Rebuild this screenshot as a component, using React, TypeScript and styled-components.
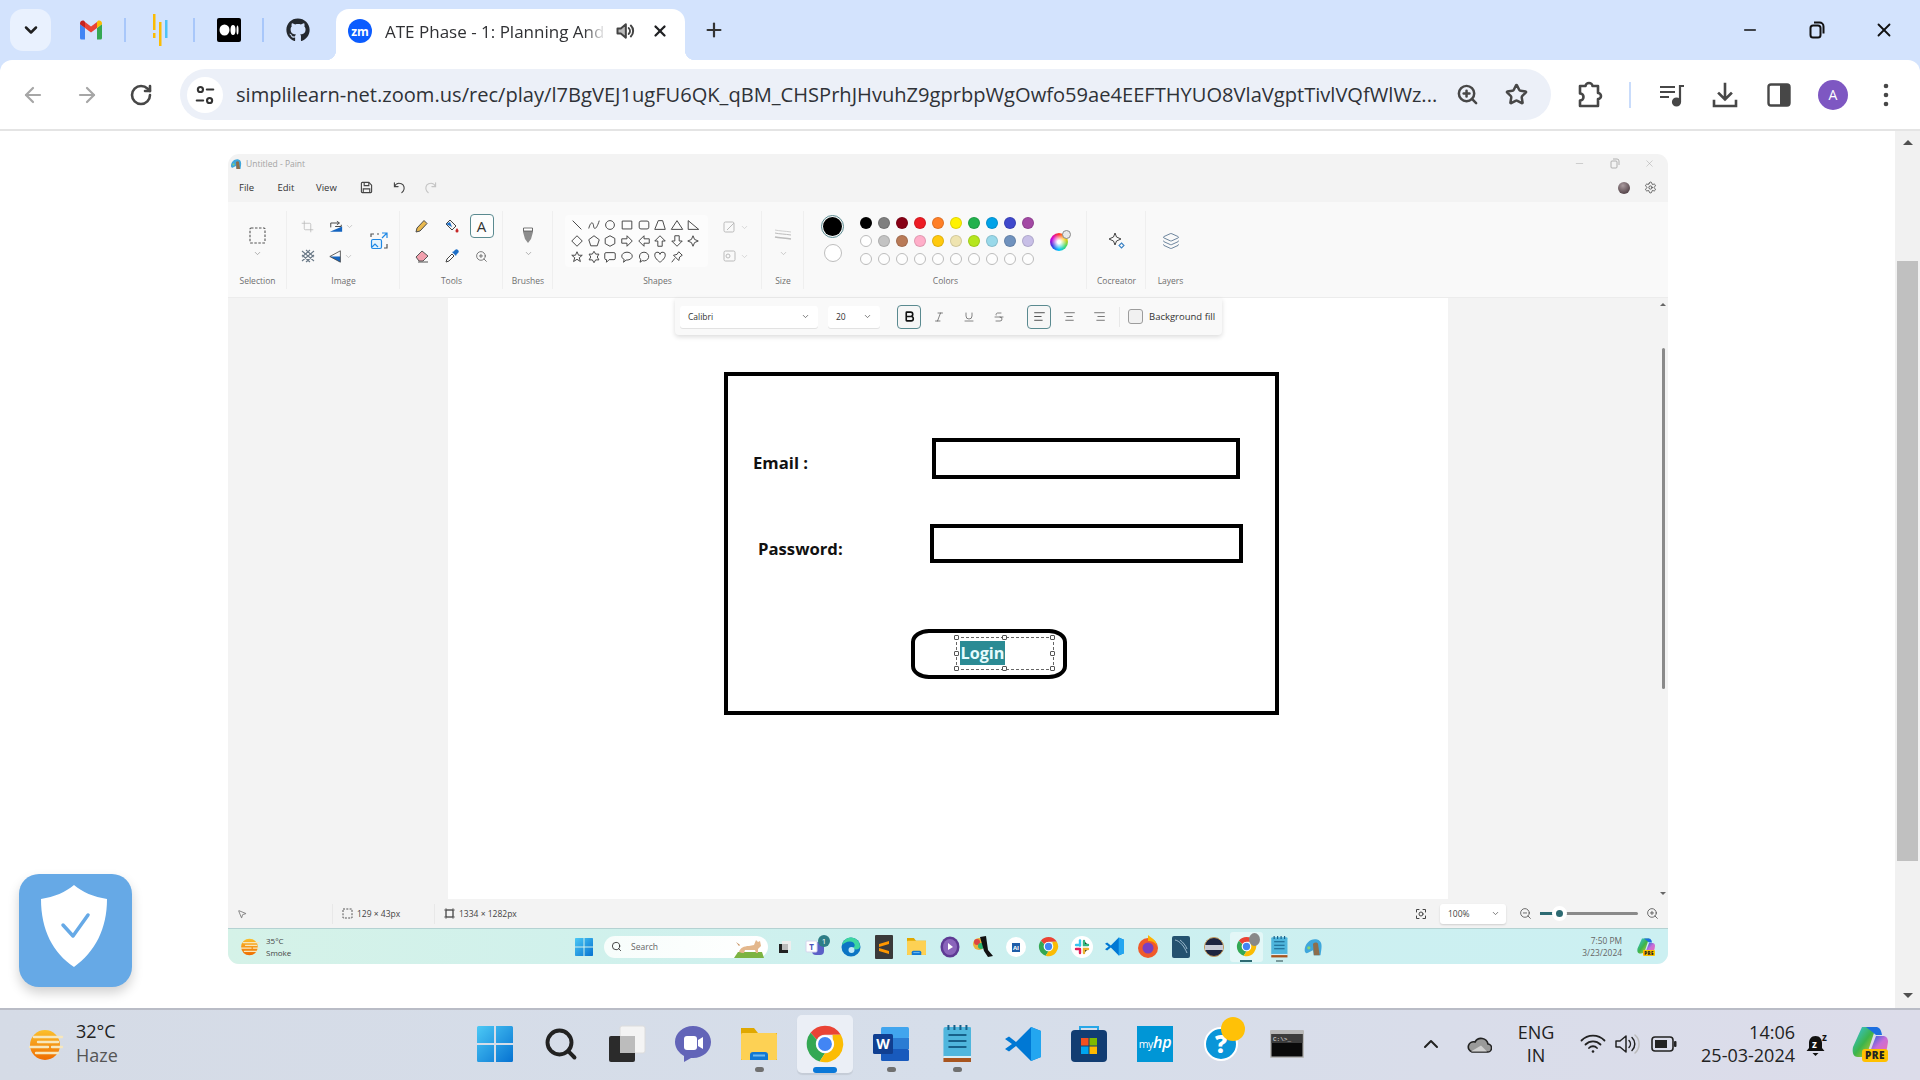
import React from "react";
import styled, { createGlobalStyle } from "styled-components";
import { ArrowLeft, ArrowRight, RotateCw, X, Plus, ChevronDown, ChevronUp, Star, ZoomIn, ZoomOut, Minus, Settings, Search, Layers, Bold, Italic, Underline, Strikethrough, AlignLeft, AlignCenter, AlignRight, Crop, MousePointer2 } from "lucide-react";
import { FaGithub } from "react-icons/fa";

const Global = createGlobalStyle`
  html, body { margin: 0; padding: 0; width: 1920px; height: 1080px; overflow: hidden; background: #fff; }
  body { font-family: "Open Sans", "Noto Sans", sans-serif; }
  * { box-sizing: border-box; }
`;

const Page = styled.div`position: relative; width: 1920px; height: 1080px; display: flex; flex-direction: column; overflow: hidden;`;
const Slot = styled.div<{ $w: number; $ml?: number }>`flex: none; width: ${p => p.$w}px; margin-left: ${p => p.$ml ?? 0}px; display: flex; align-items: center; justify-content: center; position: relative;`;

/* ---------- Chrome ---------- */
const Chrome = styled.header`flex: none; height: 131px; background: #d3e3fd;`;
const TabStrip = styled.div`height: 60px; display: flex; align-items: flex-end;`;
const TabListButton = styled.div`margin: 0 5px 9px 10px; width: 41px; height: 42px; border-radius: 13px; background: #e9f1fe; display: flex; align-items: center; justify-content: center; color: #1f1f1f;`;
const Pinned = styled.div<{ $sep?: boolean }>`
  width: 69px; height: 51px; display: flex; align-items: center; justify-content: center; position: relative; padding-bottom: 9px;
  ${p => p.$sep ? `&::after { content: ""; position: absolute; right: -1px; top: 9px; width: 2px; height: 24px; background: #a8c7fa; }` : ""}
`;
const ActiveTab = styled.div`
  margin-left: 4px; width: 349px; height: 51px; background: #fff; border-radius: 13px 13px 0 0; position: relative;
  display: flex; align-items: center; padding: 0 0 7px 12px;
  &::before, &::after { content: ""; position: absolute; bottom: 0; width: 10px; height: 10px; }
  &::before { left: -10px; background: radial-gradient(circle at 0 0, transparent 10px, #fff 10.5px); }
  &::after { right: -10px; background: radial-gradient(circle at 100% 0, transparent 10px, #fff 10.5px); }
`;
const ZoomBadge = styled.div`width: 24px; height: 24px; border-radius: 50%; background: #0b5cff; color: #fff; font-size: 12px; font-weight: 700; display: flex; align-items: center; justify-content: center; flex: none;`;
const TabTitle = styled.span`
  margin-left: 13px; width: 221px; flex: none; font-size: 17px; color: #303134; white-space: nowrap; margin-top: 1px;
  mask-image: linear-gradient(90deg, #000 90%, transparent 100%);
`;
const TabButtons = styled.div`display: flex; align-items: center; margin-left: 9px; color: #202124;`;
const NewTab = styled.div`flex: none; width: 36px; height: 60px; margin-left: 11px; display: flex; align-items: center; justify-content: center; color: #333;`;
const WindowButtons = styled.div`margin-left: auto; padding-right: 3px; height: 60px; display: flex; color: #111;`;

const Toolbar = styled.div`
  height: 71px; background: #fff; border-radius: 12px 12px 0 0; border-bottom: 2px solid #e4e4e4; display: flex; align-items: center; padding-left: 6px; color: #474747;
`;
const Omnibox = styled.div`margin-left: 12px; width: 1371px; height: 51px; border-radius: 26px; background: #ecf0f8; display: flex; align-items: center; padding-left: 7px; flex: none;`;
const TuneCircle = styled.div`width: 36px; height: 36px; border-radius: 50%; background: #fff; display: flex; align-items: center; justify-content: center; flex: none;`;
const Url = styled.div`margin-left: 13px; width: 1205px; flex: none; font-size: 20.1px; color: #2f3237; white-space: nowrap;`;
const OmniIcons = styled.div`display: flex; color: #474747;`;
const ToolSep = styled.div`width: 2px; height: 26px; background: #c9dcfb;`;
const Avatar = styled.div`width: 30px; height: 30px; border-radius: 50%; background: #7e57c2; color: #fff; font-size: 14px; display: flex; align-items: center; justify-content: center;`;

/* ---------- Page ---------- */
const Main = styled.main`flex: none; height: 877px; display: flex; background: #fff;`;
const Content = styled.div`flex: 1; padding: 23px 0 0 228px;`;
const PageScroll = styled.div`flex: none; width: 25px; background: #f1f1f1; display: flex; flex-direction: column; align-items: center; padding-top: 9px; color: #505050;`;
const PageThumb = styled.div`width: 21px; height: 600px; background: #c0c0c0; margin-top: 115.5px; margin-bottom: auto;`;
const Tri = styled.div<{ $down?: boolean; $size?: number; $c?: string }>`
  width: 0; height: 0; flex: none;
  border-left: ${p => p.$size ?? 5.5}px solid transparent; border-right: ${p => p.$size ?? 5.5}px solid transparent;
  ${p => p.$down ? `border-top: ${p.$size ?? 5.5}px solid ${p.$c ?? "#505050"};` : `border-bottom: ${p.$size ?? 5.5}px solid ${p.$c ?? "#505050"};`}
`;
const PageDown = styled(Tri)`margin-bottom: 10px;`;

/* ---------- Paint ---------- */
const Paint = styled.section`width: 1440px; height: 810px; border-radius: 11px; overflow: hidden; background: #f3f3f3; display: flex; flex-direction: column;`;
const TitleRow = styled.div`height: 21px; flex: none; display: flex; align-items: center; padding: 0 0 2px 2px; color: #a4a4a4; font-size: 8.5px; gap: 4px;`;
const WinCtl = styled.div`margin-left: auto; display: flex; color: #a0a0a0; padding-right: 13px; gap: 24px;`;
const MenuRow = styled.div`height: 27px; flex: none; display: flex; align-items: center; font-size: 9.5px; color: #333; padding: 1px 0 3px 11px;`;
const MenuItem = styled.span`width: 38.5px; flex: none;`;
const MenuRight = styled.div`margin-left: auto; display: flex; align-items: center; padding-right: 11px; gap: 14px; color: #444;`;
const UserDot = styled.div`width: 12px; height: 12px; border-radius: 50%; background: radial-gradient(circle at 40% 30%, #a99a9e, #5a4a4f 70%);`;

const Ribbon = styled.div`height: 96px; flex: none; background: #f9f9f9; border-bottom: 1px solid #ececec; display: flex;`;
const Group = styled.div<{ $w: number; $sep?: boolean }>`
  flex: none; width: ${p => p.$w}px; display: flex; flex-direction: column; align-items: center; position: relative; padding-top: 8px;
  ${p => p.$sep ? `&::after { content: ""; position: absolute; right: 0; top: 9px; bottom: 8px; width: 1px; background: #efefef; }` : ""}
`;
const GroupBody = styled.div`flex: none; width: 100%; height: 65px; display: flex; align-items: flex-start; justify-content: center;`;
const GroupLabel = styled.div`font-size: 8.5px; line-height: 12px; color: #6f6f6f; white-space: nowrap;`;
const Cell = styled.div`height: 30px; display: flex; align-items: center; justify-content: center; gap: 2px;`;
const SoloColumn = styled.div`display: flex; flex-direction: column; align-items: center; width: 40px; padding-top: 16px; gap: 5px; color: #a0a0a0;`;
const SoloIcon = styled.div`height: 18px; display: flex; align-items: center; justify-content: center;`;
const ImageGrid = styled.div`display: grid; grid-template-columns: 31px 36px; grid-auto-rows: 30px; margin-right: 8px;`;
const ImageRow = styled.div`display: flex; width: 100px; margin-left: 5px; margin-right: auto; padding-top: 1px;`;
const ResizeCell = styled.div`width: 24px; height: 60px; display: flex; align-items: center; justify-content: center;`;
const ToolsGrid = styled.div`display: grid; grid-template-columns: repeat(3, 30px); grid-auto-rows: 30px; padding-top: 1px;`;
const ActiveTool = styled.div`width: 24px; height: 24px; border: 1px solid #5a8a90; border-radius: 4px; background: #fdfdfd; display: flex; align-items: center; justify-content: center; color: #333; font-size: 15px; line-height: 1;`;
const ShapesRow = styled.div`display: flex; width: 100%; padding: 5px 0 0 12px; gap: 4px;`;
const ShapesPanel = styled.div`width: 143px; height: 52px; border-radius: 4px; background: #fcfcfc; display: grid; grid-template-columns: repeat(8, 16.6px); grid-auto-rows: 16px; padding: 2px 0 0 4px; flex: none;`;
const ShapeCell = styled.div`display: flex; align-items: center; justify-content: center;`;
const GreyTools = styled.div`display: flex; flex-direction: column; gap: 17px; padding: 6px 0 0 11px; color: #bbb;`;
const GreyTool = styled.div`display: flex; align-items: center; gap: 4px;`;
const ColorsRow = styled.div`display: flex; align-items: flex-start; width: 100%; padding-left: 17px;`;
const ActiveColours = styled.div`width: 23px; display: flex; flex-direction: column; align-items: center; gap: 6px; padding-top: 5px;`;
const CurrentColour = styled.div`width: 23px; height: 23px; border-radius: 50%; border: 1px solid #5a8a90; display: flex; align-items: center; justify-content: center;`;
const CurrentInner = styled.div`width: 19px; height: 19px; border-radius: 50%; background: #000;`;
const SecondColour = styled.div`width: 18px; height: 18px; border-radius: 50%; background: #fff; border: 1px solid #bdbdbd;`;
const Swatches = styled.div`display: grid; grid-template-columns: repeat(10, 12px); column-gap: 6px; grid-auto-rows: 12px; row-gap: 6px; margin: 7px 0 0 16px;`;
const Swatch = styled.div<{ $c?: string }>`
  width: 12px; height: 12px; border-radius: 50%; background: ${p => p.$c ?? "#fdfdfd"}; border: 1px solid ${p => p.$c && p.$c !== "#fff" ? "rgba(0,0,0,.12)" : "#bcbcbc"};
`;
const Wheel = styled.div`
  position: relative; width: 18px; height: 18px; border-radius: 50%; margin: 23px 0 0 16px; flex: none;
  background: radial-gradient(circle, #fff 0 12%, transparent 60%), conic-gradient(#ff3b30, #ffcc00, #4cd964, #00c7ff, #3a3ae0, #d400d4, #ff3b30);
`;
const WheelPlus = styled.div`position: absolute; right: -3px; top: -3px; width: 9px; height: 9px; border-radius: 50%; background: #e8e8e8; border: 1px solid #888;`;
const LoneIcon = styled.div`padding-top: 22px; display: flex; align-items: flex-start; justify-content: center; color: #444;`;

const Workspace = styled.div`flex: none; height: 601px; display: flex; position: relative; background: #f3f3f3;`;
const Gutter = styled.div`flex: none; width: 220px;`;
const Canvas = styled.div`flex: none; width: 1000px; height: 601px; background: #fff; position: relative;`;
const RailGutter = styled.div`flex: 1; display: flex; justify-content: flex-end;`;
const Rail = styled.div`width: 10px; display: flex; flex-direction: column; align-items: center; padding: 5px 0 4px;`;
const RailThumb = styled.div`width: 3px; height: 341px; border-radius: 2px; background: #8a8a8a; margin-top: 42px; margin-bottom: auto;`;

const TextBar = styled.div`
  position: absolute; left: 447px; top: 0; width: 547px; height: 37px; background: #f9f9f9; border-radius: 0 0 4px 4px;
  box-shadow: 0 2px 5px rgba(0,0,0,.14); display: flex; align-items: center; padding-left: 5px; font-size: 8.5px; color: #333;
`;
const Select = styled.div<{ $w: number; $ml?: number }>`
  width: ${p => p.$w}px; margin-left: ${p => p.$ml ?? 0}px; height: 22px; flex: none; background: #fff; border-radius: 3px; box-shadow: 0 1px 0 #e2e2e2; display: flex; align-items: center; justify-content: space-between; padding: 0 8px;
`;
const FmtBtn = styled.div<{ $on?: boolean; $ml?: number }>`
  width: 24px; height: 24px; flex: none; border-radius: 4px; display: flex; align-items: center; justify-content: center; margin-left: ${p => p.$ml ?? 6}px; color: #444;
  ${p => p.$on ? `border: 1px solid #5a8a90; background: #f6f6f6; color: #111;` : ""}
`;
const BarSep = styled.div`width: 1px; height: 20px; background: #e8e8e8; margin-left: 8px; flex: none;`;
const Check = styled.div`width: 15px; height: 15px; margin-left: 8px; flex: none; background: #f1f1f1; border: 1px solid #9c9c9c; border-radius: 3px;`;
const CheckLabel = styled.span`margin-left: 6px; white-space: nowrap; font-size: 9.5px;`;

const Drawn = styled.div<{ $x: number; $y: number; $w: number; $h: number }>`
  position: absolute; left: ${p => p.$x}px; top: ${p => p.$y}px; width: ${p => p.$w}px; height: ${p => p.$h}px; border: 4px solid #000;
`;
const DrawnButton = styled(Drawn)`border-radius: 18px / 13px;`;
const DrawnText = styled.div<{ $x: number; $y: number }>`
  position: absolute; left: ${p => p.$x}px; top: ${p => p.$y}px; font-weight: 700; font-size: 16.7px; line-height: 24px; color: #111; white-space: nowrap;
`;
const TextSelection = styled.div`position: absolute; left: 508px; top: 339px; width: 98px; height: 33px; border: 1px dashed #666;`;
const Handle = styled.div<{ $x: string; $y: string }>`
  position: absolute; left: ${p => p.$x}; top: ${p => p.$y}; width: 5px; height: 5px; margin: -3px 0 0 -3px; background: #fff; border: 1px solid #555; border-radius: 1px;
`;
const Highlight = styled.span`
  position: absolute; left: 3px; top: 3px; width: 45px; height: 24px; background: #2b8b94; color: #e6fbfd; font-weight: 700; font-size: 16.2px; line-height: 24px; white-space: nowrap; text-align: center;
`;

const StatusBar = styled.div`flex: none; height: 29px; background: #f3f3f3; display: flex; align-items: center; font-size: 8.5px; color: #444;`;
const StatusCell = styled.div<{ $w: number; $sep?: boolean }>`
  flex: none; width: ${p => p.$w}px; height: 20px; display: flex; align-items: center; gap: 4px; padding-left: 9px;
  ${p => p.$sep ? "border-left: 1px solid #e8e8e8;" : ""}
`;
const ZoomControls = styled.div`margin-left: auto; display: flex; align-items: center; padding-right: 9px; color: #444;`;
const ZoomSelect = styled(Select)`margin-left: 13px; height: 20px; box-shadow: 0 1px 2px rgba(0,0,0,.15); padding: 0 6px 0 8px;`;
const ZoomOutSlot = styled.div`width: 26px; flex: none; display: flex; justify-content: flex-end;`;
const Slider = styled.div`width: 98px; height: 3px; margin: 0 8px; background: #8a8a8a; position: relative; border-radius: 2px;`;
const SliderFill = styled.div`position: absolute; left: 0; top: 0; width: 17px; height: 3px; background: #2d6a72;`;
const SliderKnob = styled.div`position: absolute; left: 12px; top: -6px; width: 15px; height: 15px; border-radius: 50%; background: #2d6a72; border: 4px solid #fff;`;

const InnerTaskbar = styled.div`
  flex: none; height: 36px; border-top: 1px solid #b4d2d2; background: linear-gradient(90deg, #d5f2e8 0%, #cdf0ef 45%, #ccf0f2 100%); display: flex; align-items: center; padding: 0 13px 0 10px;
`;
const InnerWeather = styled.div`width: 337px; display: flex; align-items: center; gap: 6px; padding-left: 2px; font-size: 8px; line-height: 11.5px; color: #444; flex: none;`;
const InnerStart = styled.div`width: 29px; flex: none; display: flex; justify-content: flex-start;`;
const InnerSearch = styled.div`
  width: 164px; height: 22px; border-radius: 11px; background: linear-gradient(90deg, #f7fdfb, #ffffff); display: flex; align-items: center; padding-left: 7px; gap: 9px; font-size: 8.5px; color: #666; flex: none; position: relative;
`;
const DoodleWrap = styled.div`margin-left: auto; margin-right: 4px; display: flex;`;
const InnerIcons = styled.div`display: flex; flex: none;`;
const InnerIcon = styled.div<{ $on?: boolean }>`
  width: 33px; height: 30px; display: flex; align-items: center; justify-content: center; position: relative; flex: none;
  ${p => p.$on ? `background: rgba(255,255,255,.45); border-radius: 3px; &::after { content: ""; position: absolute; bottom: 0; left: 10px; width: 12px; height: 2px; background: #2d6a72; }` : ""}
`;
const InnerClock = styled.div`margin-left: auto; text-align: right; font-size: 8.4px; line-height: 12px; color: #666; margin-right: 15px;`;

/* ---------- Windows taskbar ---------- */
const Taskbar = styled.footer`
  flex: none; height: 72px; border-top: 2px solid #b9bcc6; background: linear-gradient(90deg, #d5dbe6 0%, #d6deea 50%, #dcdcea 100%); display: flex; align-items: center;
`;
const TaskWeather = styled.div`width: 462px; flex: none; display: flex; align-items: center; padding-left: 28px; gap: 12px;`;
const WeatherText = styled.div`font-size: 18px; line-height: 23.5px; color: #222; margin-top: -3px;`;
const WeatherSub = styled.div`color: #555;`;
const TaskIcons = styled.div`display: flex; flex: none; height: 70px; align-items: center;`;
const TaskIcon = styled.div<{ $on?: boolean; $dot?: boolean }>`
  width: 66px; height: 58px; flex: none; display: flex; align-items: center; justify-content: center; position: relative; border-radius: 5px; margin-top: -2px;
  ${p => p.$on ? `background: #ebeff6; box-shadow: 0 2px 1px rgba(0,0,0,.08); width: 56px; margin: -2px 5px 0; &::after { content: ""; position: absolute; bottom: 0; left: 16px; width: 24px; height: 6px; border-radius: 3px; background: #0a78d8; }` : ""}
  ${p => p.$dot ? `&::after { content: ""; position: absolute; bottom: 1px; left: 29px; width: 9px; height: 5px; border-radius: 3px; background: #707070; }` : ""}
`;
const Tray = styled.div`display: flex; align-items: center; flex: none; margin-left: 93px; color: #222; margin-top: -2px;`;
const TrayText = styled.div<{ $w: number; $r?: boolean }>`
  width: ${p => p.$w}px; flex: none; font-size: 18px; line-height: 23.5px; color: #222; text-align: ${p => p.$r ? "right" : "center"}; white-space: nowrap;
`;

/* Shield badge overlay */
const ShieldBadge = styled.div`
  position: absolute; left: 19px; top: 874px; width: 113px; height: 113px; border-radius: 20px; background: #66a9e6; box-shadow: 0 6px 12px rgba(0,0,0,.18); display: flex; align-items: center; justify-content: center; padding: 0 3px 9px 0;
`;

/* ---------- Icons ---------- */
const Stroke: React.FC<{ s?: number; w?: number; c?: string; v?: number; children: React.ReactNode }> = ({ s = 24, w = 2, c = "currentColor", v = 24, children }) => (
  <svg width={s} height={s} viewBox={`0 0 ${v} ${v}`} fill="none" stroke={c} strokeWidth={w} strokeLinecap="round" strokeLinejoin="round">{children}</svg>
);
const Gmail = () => (
  <svg width="24" height="20" viewBox="0 0 24 20">
    <path d="M1 4v14a1.500 1.500 0 0 0 1.500 1.500H6V8z" fill="#4285f4" />
    <path d="M23 4v14a1.500 1.500 0 0 1-1.500 1.500H18V8z" fill="#34a853" />
    <path d="M6 8l6 4.500L18 8V2l-6 4.500L6 2z" fill="#ea4335" />
    <path d="M18 2v6l5-3.700V3.200C23 1 20.400-.4 18.700.9z" fill="#fbbc04" />
    <path d="M6 2v6L1 4.300V3.200C1 1 3.600-.4 5.300.9z" fill="#c5221f" />
  </svg>
);
const BarsLogo = () => (
  <svg width="16" height="32" viewBox="0 0 16 32">
    <rect x="1" y="0" width="2.500" height="16" fill="#fbbc04" /><rect x="1" y="19" width="2.500" height="5" fill="#fbbc04" />
    <rect x="7" y="8" width="2.500" height="24" fill="#fbbc04" />
    <rect x="13" y="6" width="2.500" height="18" fill="#4fc3f7" />
  </svg>
);
const Medium = () => (
  <svg width="24" height="24" viewBox="0 0 24 24">
    <rect width="24" height="24" rx="2" fill="#000" />
    <ellipse cx="7.500" cy="12" rx="5" ry="5.500" fill="#fff" /><ellipse cx="16" cy="12" rx="2.500" ry="5" fill="#fff" /><ellipse cx="20.500" cy="12" rx="1" ry="4.500" fill="#fff" />
  </svg>
);
const Speaker = ({ s = 22, c = "#444" }: { s?: number; c?: string }) => (
  <svg width={s} height={s} viewBox="0 0 24 24" fill="none" stroke={c} strokeWidth="2.400"><path d="M3 9v6h4l6 5V4L7 9z" fill="#bbb" strokeLinejoin="round" /><path d="M16.500 8.500a5 5 0 0 1 0 7M19 5.500a9 9 0 0 1 0 13" strokeLinecap="round" /></svg>
);
const Restore = () => (
  <svg width="16" height="18" viewBox="0 0 16 18" fill="none" stroke="#111" strokeWidth="2"><rect x="1.500" y="4.500" width="10" height="12" rx="2.500" /><path d="M5 1.500h5.500a4 4 0 0 1 4 4v7" /></svg>
);
const Tune = () => (
  <Stroke s={22} w={2.300} c="#333"><circle cx="7" cy="6" r="2.800" /><path d="M14 6h7M3 18h7" /><circle cx="17" cy="18" r="2.800" /></Stroke>
);
const Extension = () => (
  <svg width="26" height="28" viewBox="0 0 26 28" fill="none" stroke="#474747" strokeWidth="2.600" strokeLinejoin="round"><path d="M3 5h5.500a3.500 3 0 0 1 7 0H21v7a3 3 0 0 1 0 6v7H3v-5.500a3.500 3.500 0 0 0 0-7z" /></svg>
);
const MediaQueue = () => (
  <svg width="26" height="26" viewBox="0 0 26 26" fill="none" stroke="#474747" strokeWidth="2.200"><path d="M1 5h15M1 10h15M1 15h9" /><path d="M21 20V4h4" /><circle cx="17.500" cy="20" r="3.500" fill="#474747" /></svg>
);
const DownloadIc = () => (
  <svg width="26" height="26" viewBox="0 0 26 26" fill="none" stroke="#474747" strokeWidth="2.600" strokeLinecap="square"><path d="M13 2v15M7 11.500l6 6 6-6M2 19v5h22v-5" /></svg>
);
const SidePanel = () => (
  <svg width="24" height="24" viewBox="0 0 24 24"><rect x="1.500" y="1.500" width="21" height="21" rx="2.500" fill="none" stroke="#474747" strokeWidth="2.400" /><rect x="13" y="2" width="10" height="20" fill="#474747" /></svg>
);
const Kebab = () => (
  <svg width="6" height="24" viewBox="0 0 6 24" fill="#474747"><circle cx="3" cy="3" r="2.300" /><circle cx="3" cy="12" r="2.300" /><circle cx="3" cy="21" r="2.300" /></svg>
);
const PaintLogo = ({ s = 12 }: { s?: number }) => (
  <svg width={s} height={s} viewBox="0 0 24 24"><path d="M2 16C2 7 10 1 17 3c5 1.500 6 6 5 12l-1 7h-8l-1-6-6 3c-2 1-4 0-4-3z" fill="#3fa7dc" /><path d="M12 8c2-2 5-2 6 0l2 14h-7z" fill="#8d6e4c" /><circle cx="7" cy="13" r="2" fill="#8bd46e" /></svg>
);
const Dashed = ({ s = 17 }: { s?: number }) => (
  <svg width={s} height={s} viewBox="0 0 17 17" fill="none" stroke="#555" strokeWidth="1.100" strokeDasharray="2.500 1.500"><rect x="1" y="1" width="15" height="15" rx="1" /></svg>
);
const Save = () => (
  <svg width="13" height="13" viewBox="0 0 14 14" fill="none" stroke="#444" strokeWidth="1.200"><path d="M2.500 1.500h7l3 3v7a1 1 0 0 1-1 1h-9a1 1 0 0 1-1-1v-9a1 1 0 0 1 1-1z" /><path d="M4.500 1.500v3.500h5v-3.500M3.500 12.500v-4h7v4" /></svg>
);
const Undo = ({ c = "#444" }: { c?: string }) => (
  <svg width="13" height="13" viewBox="0 0 14 14" fill="none" stroke={c} strokeWidth="1.200" strokeLinecap="round"><path d="M1.500 2v4h4M1.500 6C3 3 6 1.800 9 3s4 5 2 8l-1.500 1.500" /></svg>
);
const Redo = () => (
  <svg width="13" height="13" viewBox="0 0 14 14" fill="none" stroke="#c4c4c4" strokeWidth="1.200" strokeLinecap="round"><path d="M12.500 2v4h-4M12.500 6C11 3 8 1.800 5 3s-4 5-2 8l1.500 1.500" /></svg>
);
const Rotate = () => (
  <svg width="14" height="13" viewBox="0 0 16 14"><path d="M1 13L15 7v6z" fill="#1565c0" /><path d="M2 8V3h9M9 1l3 2-3 2M14 5v2H7" fill="none" stroke="#444" strokeWidth="1.100" /></svg>
);
const Flip = () => (
  <svg width="13" height="13" viewBox="0 0 16 16"><path d="M14 8v7L1 8z" fill="#1565c0" /><path d="M14 1L1 8l13 7z" fill="none" stroke="#444" strokeWidth="1" /></svg>
);
const Skew = () => (
  <svg width="14" height="14" viewBox="0 0 14 14" stroke="#6b7a88" strokeWidth="1.100" fill="none"><path d="M1 2l12 10M1 6l8 7M5 1l8 7M13 2L1 12M13 6l-8 7M9 1L1 8" /></svg>
);
const ResizeImg = () => (
  <svg width="18" height="18" viewBox="0 0 18 18" fill="none" strokeWidth="1.200"><path d="M1 5V2h3M7 2h2M17 12v4h-3" stroke="#555" /><path d="M12 1h5v5M17 1l-5 5" stroke="#1e88e5" /><rect x="1.500" y="7.500" width="10" height="9" rx="1.500" stroke="#1e88e5" fill="#e3f2fd" /><path d="M2 15l3-3 3 3" stroke="#1e88e5" /></svg>
);
const Pencil = () => (
  <svg width="14" height="14" viewBox="0 0 14 14"><path d="M1 13l1-4 7-7.500 3 3L5 12z" fill="#e9b94f" stroke="#4a4a4a" strokeWidth="1" strokeLinejoin="round" /></svg>
);
const FillBucket = () => (
  <svg width="14" height="14" viewBox="0 0 14 14"><path d="M1 5l4-4 6 6-4 4z" fill="#f4f4f4" stroke="#444" strokeWidth="1" /><path d="M1 5l4-2 2 5z" fill="#1e6fc7" /><path d="M12 9c1 1.500 1.500 2 1.500 3a1.500 1.500 0 0 1-3 0c0-1 .5-1.500 1.500-3z" fill="#c62828" /></svg>
);
const Eraser = () => (
  <svg width="14" height="13" viewBox="0 0 14 13"><path d="M1 7l6-6 6 5-5 5H4z" fill="#f2a0ae" stroke="#555" strokeWidth="1" strokeLinejoin="round" /><path d="M3 12h10" stroke="#555" strokeWidth="1" /></svg>
);
const Picker = () => (
  <svg width="14" height="14" viewBox="0 0 14 14"><path d="M1 13l1-3 5-5 2 2-5 5z" fill="#fff" stroke="#444" strokeWidth="1" /><path d="M7 3l1.500-.5L10 1a2 2 0 0 1 3 3l-1.500 1.500L11 7z" fill="#1e6fc7" /></svg>
);
const Brush = () => (
  <svg width="10" height="17" viewBox="0 0 10 17"><path d="M0 1h10v4L8 12l-3 4-3-4L0 5z" fill="#8c8c8c" /><path d="M.5 1h9v3h-9z" fill="#fff" stroke="#555" strokeWidth=".8" /></svg>
);
const SizeIc = () => (
  <svg width="18" height="12" viewBox="0 0 18 12" fill="none" stroke="#bcbcbc"><path d="M1 1c4 1 10 1 16 2" strokeWidth=".7" /><path d="M1 4c4 1 10 1 16 2" strokeWidth="1" /><path d="M1 8c4 1 10 1 16 2" strokeWidth="1.600" /></svg>
);
const Sparkle = () => (
  <svg width="18" height="18" viewBox="0 0 18 18" fill="none"><path d="M7 1l1.500 4L13 7 8.500 9 7 13 5.500 9 1 7l4.500-2z" stroke="#444" strokeWidth="1" strokeLinejoin="round" /><path d="M13.500 11l2.500 2.500-2.500 2.500-2.500-2.500z" stroke="#3b82c4" strokeWidth="1.100" /></svg>
);
const Fit = () => (
  <Stroke s={12} w={2}><path d="M3 8V3h5M16 3h5v5M21 16v5h-5M8 21H3v-5" /><circle cx="12" cy="12" r="4" /></Stroke>
);
const SelIc = () => <svg width="11" height="11" viewBox="0 0 11 11" fill="none" stroke="#555" strokeDasharray="2 1.300"><rect x="1" y="1" width="9" height="9" /></svg>;
const CanvasIc = () => <svg width="11" height="11" viewBox="0 0 11 11" fill="none" stroke="#444"><rect x="2" y="2" width="7" height="7" /><path d="M0 2h11M0 9h11M2 0v11M9 0v11" strokeWidth=".6" /></svg>;

const WinLogo = ({ s = 36 }: { s?: number }) => (
  <svg width={s} height={s} viewBox="0 0 36 36">
    <defs><linearGradient id={`wl${s}`} x1="0" y1="0" x2="1" y2="1"><stop offset="0" stopColor="#4cc9f5" /><stop offset="1" stopColor="#0672d1" /></linearGradient></defs>
    <path d="M0 1.500A1.500 1.500 0 0 1 1.500 0H17v17H0zM19 0h15.500A1.500 1.500 0 0 1 36 1.500V17H19zM0 19h17v17H1.500A1.500 1.500 0 0 1 0 34.500zM19 19h17v15.500a1.500 1.500 0 0 1-1.500 1.500H19z" fill={`url(#wl${s})`} />
  </svg>
);
const HazeSun = ({ s = 36 }: { s?: number }) => (
  <svg width={s} height={s} viewBox="0 0 36 36">
    <defs><linearGradient id={`hz${s}`} x1="0" y1="0" x2="0" y2="1"><stop offset="0" stopColor="#fbc02d" /><stop offset="1" stopColor="#ef6c00" /></linearGradient></defs>
    <circle cx="17" cy="18" r="15" fill={`url(#hz${s})`} />
    <path d="M6 10h28M10 15h20M2 20h18M24 20h10M8 26h22" stroke="#f7e7bd" strokeWidth="2.400" strokeLinecap="round" />
  </svg>
);
const TaskView = () => (
  <svg width="38" height="38" viewBox="0 0 38 38"><rect x="12" y="1" width="25" height="27" rx="2" fill="#f4f4f4" stroke="#dcdcdc" /><rect x="1" y="11" width="26" height="26" rx="2" fill="#2b2b2b" /><rect x="12" y="11" width="15" height="17" fill="#bcbcbc" /></svg>
);
const ChatIc = () => (
  <svg width="38" height="38" viewBox="0 0 38 38"><path d="M19 1c10 0 18 7 18 16s-8 16-18 16h-2l-7 4v-6C5 28 1 23 1 17 1 8 9 1 19 1z" fill="#6264b8" /><rect x="10" y="11" width="13" height="14" rx="3" fill="#fff" /><path d="M24 15l5-3v12l-5-3z" fill="#fff" /></svg>
);
const FolderIc = ({ s = 36 }: { s?: number }) => (
  <svg width={s} height={s} viewBox="0 0 36 36"><path d="M0 2h13l4 5h19v27H0z" fill="#e0a800" /><rect y="7" width="36" height="27" rx="1.500" fill="#fdd154" /><path d="M9 34v-5a3 3 0 0 1 3-3h12a3 3 0 0 1 3 3v5z" fill="#1078d4" /><rect x="12" y="28.500" width="12" height="2" fill="#6db9ef" /></svg>
);
const ChromeIc = ({ s = 36 }: { s?: number }) => (
  <svg width={s} height={s} viewBox="0 0 48 48">
    <path d="M24 2a22 22 0 0 1 19 11H24a11 11 0 0 0-9.800 6L6.600 10.600A22 22 0 0 1 24 2z" fill="#ea4335" />
    <path d="M6.600 10.600L14.200 19a11 11 0 0 0 9.800 16l-6.500 10A22 22 0 0 1 6.600 10.600z" fill="#34a853" />
    <path d="M43 13a22 22 0 0 1-25.500 32L24 35a11 11 0 0 0 9.500-16.500L33 13z" fill="#fbbc04" />
    <circle cx="24" cy="24" r="10.500" fill="#fff" /><circle cx="24" cy="24" r="8.300" fill="#4285f4" />
  </svg>
);
const WordIc = () => (
  <svg width="36" height="36" viewBox="0 0 36 36">
    <rect x="8" y="1" width="28" height="11.500" rx="1.500" fill="#41a5ee" /><rect x="8" y="12" width="28" height="11" fill="#2b7cd3" /><rect x="8" y="23" width="28" height="12" rx="1.500" fill="#185abd" />
    <rect x="0" y="8" width="20" height="20" rx="1.500" fill="#103f91" /><text x="10" y="23" textAnchor="middle" fontSize="14" fontWeight="700" fill="#fff" fontFamily="Open Sans">W</text>
  </svg>
);
const Notepad = ({ s = 38 }: { s?: number }) => (
  <svg width={s * 0.76} height={s} viewBox="0 0 28 38">
    <rect x="0" y="2" width="28" height="31" rx="2" fill="#4fb6dd" /><rect y="31" width="28" height="2" fill="#d8eef6" /><rect y="33" width="28" height="4" fill="#a8551f" />
    <path d="M5 0v5M11 0v5M17 0v5M23 0v5" stroke="#17618a" strokeWidth="2" /><path d="M5 10h18M5 16h18M5 22h18" stroke="#17618a" strokeWidth="1.800" />
  </svg>
);
const VSCode = ({ s = 36 }: { s?: number }) => (
  <svg width={s} height={s} viewBox="0 0 36 36"><path d="M26 1L11 16 4 10.500 0 13l7 5-7 5 4 2.500L11 20l15 15 10-4V5z" fill="#0078d4" /><path d="M26 1l10 4v26l-10 4z" fill="#23a6f0" /></svg>
);
const Store = () => (
  <svg width="36" height="38" viewBox="0 0 36 38"><path d="M9 6V2h18v4" fill="none" stroke="#29a8e8" strokeWidth="2" /><rect y="5" width="36" height="32" rx="4" fill="#123d72" /><rect x="10" y="13" width="7.500" height="7.500" fill="#f25022" /><rect x="18.500" y="13" width="7.500" height="7.500" fill="#7fba00" /><rect x="10" y="21.500" width="7.500" height="7.500" fill="#00a4ef" /><rect x="18.500" y="21.500" width="7.500" height="7.500" fill="#ffb900" /></svg>
);
const MyHP = styled.div`width: 36px; height: 36px; background: #0096d6; color: #fff; display: flex; align-items: baseline; justify-content: center; padding-top: 7px; font-size: 10.5px; letter-spacing: -.3px; line-height: 18px;`;
const MyHPBold = styled.span`font-size: 16px; font-style: italic; font-weight: 600;`;
const HelpWrap = styled.div`position: relative; width: 34px; height: 34px; border-radius: 50%; background: #0a95d8; border: 2px solid #fff; color: #fff; font-weight: 800; font-size: 24px; display: flex; align-items: center; justify-content: center; line-height: 1;`;
const HelpDot = styled.div`position: absolute; right: -9px; top: -12px; width: 24px; height: 24px; border-radius: 50%; background: #ffc107;`;
const Cmd = () => (
  <svg width="34" height="28" viewBox="0 0 34 28"><rect width="34" height="28" rx="1" fill="#b8b8b8" /><rect x="1.500" y="4" width="31" height="22.500" fill="#0a0a0a" /><rect x="1.500" y="4" width="31" height="9" fill="#3c3c3c" /><text x="3" y="11" fontSize="6" fill="#e8e8e8" fontFamily="Liberation Mono">C:\&gt;_</text></svg>
);
const Cloud = () => (
  <svg width="26" height="20" viewBox="0 0 26 20"><path d="M6 18h15a4 4 0 0 0 1-8 7 7 0 0 0-13-2 5 5 0 0 0-3 10z" fill="#9a9a9a" stroke="#222" strokeWidth="1.600" /><path d="M5 17.500h16l-6-6z" fill="#cfcfcf" /></svg>
);
const Wifi = () => (
  <svg width="26" height="20" viewBox="0 0 26 20" fill="none" stroke="#222" strokeWidth="1.800" strokeLinecap="round"><path d="M1.500 6.500a16 16 0 0 1 23 0M5.500 10.500a10.500 10.500 0 0 1 15 0M9 14a5.500 5.500 0 0 1 8 0" /><circle cx="13" cy="17.500" r="1.300" fill="#222" stroke="none" /></svg>
);
const Vol = () => (
  <svg width="26" height="22" viewBox="0 0 26 22" fill="none" stroke="#222" strokeWidth="1.500" strokeLinejoin="round"><path d="M2 8v6h4l6 5V3L6 8z" /><path d="M15 7.500a5 5 0 0 1 0 7M18 4.500a9 9 0 0 1 0 13" strokeLinecap="round" /><path d="M21 2a12 12 0 0 1 0 18" stroke="#bbb" strokeLinecap="round" /></svg>
);
const Battery = () => (
  <svg width="26" height="16" viewBox="0 0 26 16"><rect x="1" y="1" width="21" height="14" rx="3" fill="none" stroke="#222" strokeWidth="1.600" /><rect x="4" y="4" width="12" height="8" fill="#222" /><rect x="23" y="5" width="2.500" height="6" rx="1" fill="#222" /></svg>
);
const Bell = () => (
  <svg width="24" height="26" viewBox="0 0 24 26"><path d="M9.500 5C5 5 3 8.500 3 12v5l-2.500 3h18L16 17v-5c0-3.500-2-7-6.500-7z" fill="#111" /><path d="M6.500 22h6l-3 3z" fill="#111" /><text x="6" y="16.500" fontSize="10" fontWeight="700" fill="#fff" fontFamily="Open Sans">z</text><text x="16" y="10" fontSize="10" fontWeight="700" fill="#111" fontFamily="Open Sans">z</text></svg>
);
const PreTag = styled.span<{ $big?: boolean }>`
  position: absolute; right: 0; bottom: 0; background: #ffc000; color: #222; font-weight: 800; border-radius: ${p => p.$big ? 3 : 1}px; font-size: ${p => p.$big ? 10 : 4.500}px; line-height: ${p => p.$big ? 13 : 6}px; padding: 0 ${p => p.$big ? 3 : 1}px; letter-spacing: .5px;
`;
const CopilotWrap = styled.div<{ $s: number }>`position: relative; width: ${p => p.$s}px; height: ${p => p.$s}px; flex: none;`;
const Copilot = ({ s = 36 }: { s?: number }) => (
  <CopilotWrap $s={s}>
    <svg width={s} height={s} viewBox="0 0 36 36">
      <defs>
        <linearGradient id={`cpa${s}`} x1="0" y1="0" x2="1" y2="1"><stop offset="0" stopColor="#36c5f0" /><stop offset=".5" stopColor="#3cb44b" /><stop offset="1" stopColor="#f5d020" /></linearGradient>
        <linearGradient id={`cpb${s}`} x1="0" y1="0" x2="1" y2="1"><stop offset="0" stopColor="#1a5fe0" /><stop offset=".5" stopColor="#c86dd7" /><stop offset="1" stopColor="#f26ba7" /></linearGradient>
      </defs>
      <path d="M10 1h14L16 25c-1 4-4 6-8 6H6C1 31 0 26 1 21z" fill={`url(#cpa${s})`} />
      <path d="M20 28h8c4 0 6-2 7-6l1-6c0-4-2-6-5-6h-7L18 26z" fill={`url(#cpb${s})`} />
      <path d="M14 1h10c3 0 5 2 6 8h-6z" fill="#1d6fe0" />
    </svg>
    <PreTag $big={s > 24}>PRE</PreTag>
  </CopilotWrap>
);
const Cat = () => (
  <svg width="30" height="22" viewBox="0 0 30 22"><path d="M0 22l4-6h24l2 6z" fill="#7cb342" /><path d="M5 16c1-4 5-6 10-6l5-1 2-5 2 2 2-1 1 5-3 3v4h-2l-1-3H11l-1 3H8z" fill="#e3b78c" /><path d="M5 10l-3-4 4 3z" fill="#c58d5a" /></svg>
);
const Teams = () => (
  <svg width="26" height="24" viewBox="0 0 26 24"><rect x="7" y="7" width="12" height="13" rx="4" fill="#5b5fc7" /><rect x="1" y="6" width="11" height="11" rx="1" fill="#fff" stroke="#d5d5ee" /><text x="6.500" y="15" textAnchor="middle" fontSize="8" fontWeight="700" fill="#4b53bc" fontFamily="Open Sans">T</text><circle cx="19" cy="6" r="6" fill="#2d7d86" /><text x="19" y="9" textAnchor="middle" fontSize="8" fill="#fff" fontFamily="Open Sans">1</text></svg>
);
const Edge = () => (
  <svg width="20" height="20" viewBox="0 0 20 20"><circle cx="10" cy="10" r="9.500" fill="#0c75c4" /><path d="M1 8c1-5 5-7.500 9-7.500 5 0 9 4 9 9 0 2-2 3-4 3-1.500 0-3-1-3-2 3-1 2-6-3-6-4 0-6 2-8 3.500z" fill="#3ed6a0" /><circle cx="10.500" cy="13" r="3" fill="#bfe8f7" /></svg>
);
const Sublime = () => (
  <svg width="18" height="24" viewBox="0 0 18 24"><rect width="18" height="24" rx="1" fill="#3a3a3a" /><path d="M4 9l10-3v3L4 12zM4 13l10 3v3L4 16z" fill="#ff9800" /></svg>
);
const Dial = () => (
  <svg width="20" height="22" viewBox="0 0 20 22"><ellipse cx="10" cy="11" rx="9.500" ry="10.500" fill="#5e3a94" /><ellipse cx="10" cy="11" rx="7" ry="8" fill="#8a65bb" /><path d="M8 7l5 4-5 3z" fill="#fff" /></svg>
);
const ColorCam = () => (
  <svg width="22" height="22" viewBox="0 0 22 22"><circle cx="7" cy="8" r="6" fill="#e8b33e" /><circle cx="5" cy="6" r="3" fill="#d44" /><circle cx="9" cy="10" r="3" fill="#2bb673" /><path d="M8 1l6-1 2 14 5 6-5 1-4-6z" fill="#111" /></svg>
);
const WordMini = () => (
  <svg width="20" height="20" viewBox="0 0 20 20"><circle cx="10" cy="10" r="10" fill="#fff" /><rect x="6" y="6" width="8" height="9" fill="#1f5da8" /><text x="10" y="13" textAnchor="middle" fontSize="6" fontWeight="700" fill="#fff" fontFamily="Open Sans">AI</text></svg>
);
const Slack = () => (
  <svg width="22" height="22" viewBox="0 0 22 22"><circle cx="11" cy="11" r="11" fill="#fff" /><g strokeWidth="2.400" strokeLinecap="round"><path d="M9 4.500v5" stroke="#36c5f0" /><path d="M5 9h4" stroke="#36c5f0" /><path d="M13 5v4h4" stroke="#2eb67d" /><path d="M13 17v-4h4" stroke="#ecb22e" /><path d="M9 13v4M5 13h4" stroke="#e01e5a" /></g></svg>
);
const Firefox = () => (
  <svg width="22" height="24" viewBox="0 0 22 24"><circle cx="11" cy="13" r="10" fill="#f05a2a" /><circle cx="11" cy="13" r="5.500" fill="#7a3fc0" /><path d="M11 0c3 3 8 4 9 11-2-4-5-5-9-5z" fill="#ffb300" /></svg>
);
const Mysql = () => (
  <svg width="18" height="22" viewBox="0 0 18 22"><rect width="18" height="22" rx="2" fill="#24526f" /><path d="M3 4c5 1 9 6 12 13M8 4c3 2 6 6 7 9" stroke="#b9d3e3" strokeWidth=".8" fill="none" /></svg>
);
const DarkDisc = () => (
  <svg width="20" height="20" viewBox="0 0 20 20"><circle cx="10" cy="10" r="9.500" fill="#1d2440" stroke="#c79a5a" /><rect x="1" y="8" width="18" height="5" fill="#c8cbd6" /></svg>
);
const ChromeAvatar = styled.div`position: relative; display: flex;`;
const MiniAvatar = styled.div`position: absolute; right: -3px; top: -3px; width: 11px; height: 13px; border-radius: 50%; background: #888;`;
const BadgeDots = styled.div`position: absolute; bottom: 0; left: 13px; width: 7px; height: 2px; background: #7a9a9c;`;

const shapes = [
  "M3 3L13 13", "M2 12C4 4 7 4 7.500 9S11 13 14 3", "M8 3a5 5 0 1 0 .01 0z", "M2.500 3.500h11v9h-11z",
  "M4.500 3.500h7a2 2 0 0 1 2 2v5a2 2 0 0 1-2 2h-7a2 2 0 0 1-2-2v-5a2 2 0 0 1 2-2z", "M6 3h5l3 10H2z", "M8 3l6.500 10h-13z", "M2.500 3v10h12z",
  "M8 2l6 6-6 6-6-6z", "M8 2l6 4.500-2.300 7H4.300L2 6.500z", "M8 2l5.500 3v6L8 14l-5.500-3V5z", "M2 5.500h6V2l6 6-6 6v-3.500H2z",
  "M14 5.500H8V2L2 8l6 6v-3.500h6z", "M5.500 14V8H2l6-6 6 6h-3.500v6z", "M5.500 2v6H2l6 6 6-6h-3.500V2z", "M8 2l1.800 4.200L14 8l-4.200 1.800L8 14l-1.800-4.200L2 8l4.200-1.800z",
  "M8 2l1.800 4h4.200l-3.400 2.800 1.300 4.400L8 10.600l-3.900 2.600 1.300-4.400L2 6h4.200z", "M8 1.500l1.900 3.200h3.700l-1.900 3.300 1.900 3.300H9.900L8 14.500l-1.900-3.200H2.400L4.300 8 2.400 4.700h3.700z",
  "M3.500 3h9A1.500 1.500 0 0 1 14 4.500v5a1.500 1.500 0 0 1-1.500 1.500H7l-3 3v-3h-.5A1.500 1.500 0 0 1 2 9.500v-5A1.500 1.500 0 0 1 3.500 3z",
  "M8 2.500c3.300 0 6 2 6 4.500s-2.700 4.500-6 4.500H7l-3 2.500.8-3.200C3 10 2 8.600 2 7c0-2.500 2.700-4.500 6-4.500z",
  "M8 2.500a5.500 5 0 1 1-2 9.700L3.500 14l.7-3A5 5 0 0 1 8 2.500z", "M8 14S2 10 2 6a3 3 0 0 1 6-1 3 3 0 0 1 6 1c0 4-6 8-6 8z", "M10 2l4 4-3 2-1 4-6-6 4-1zM5.500 9.500L2 14",
];
const row1 = ["#000", "#7f7f7f", "#880015", "#ed1c24", "#ff7f27", "#fff200", "#22b14c", "#00a2e8", "#3f48cc", "#a349a4"];
const row2 = ["#fff", "#c3c3c3", "#b97a57", "#ffaec9", "#ffc90e", "#efe4b0", "#b5e61d", "#99d9ea", "#7092be", "#c8bfe7"];

const Chev = ({ c = "#999" }: { c?: string }) => <ChevronDown size={9} color={c} strokeWidth={2} />;

export default function App() {
  return (
    <Page>
      <Global />
      <Chrome>
        <TabStrip>
          <TabListButton><ChevronDown size={20} strokeWidth={3} /></TabListButton>
          <Pinned $sep><Gmail /></Pinned>
          <Pinned $sep><BarsLogo /></Pinned>
          <Pinned $sep><Medium /></Pinned>
          <Pinned><FaGithub size={24} color="#24292f" /></Pinned>
          <ActiveTab>
            <ZoomBadge>zm</ZoomBadge>
            <TabTitle>ATE Phase - 1: Planning And</TabTitle>
            <TabButtons>
              <Slot $w={20}><Speaker /></Slot>
              <Slot $w={50}><X size={18} strokeWidth={3} /></Slot>
            </TabButtons>
          </ActiveTab>
          <NewTab><Plus size={22} strokeWidth={2.4} /></NewTab>
          <WindowButtons>
            <Slot $w={67}><Minus size={18} strokeWidth={2.2} /></Slot>
            <Slot $w={67}><Restore /></Slot>
            <Slot $w={67}><X size={22} strokeWidth={2} /></Slot>
          </WindowButtons>
        </TabStrip>
        <Toolbar>
          <Slot $w={54}><ArrowLeft size={24} color="#a6a6a6" strokeWidth={2.2} /></Slot>
          <Slot $w={54}><ArrowRight size={24} color="#a6a6a6" strokeWidth={2.2} /></Slot>
          <Slot $w={54}><RotateCw size={24} color="#474747" strokeWidth={2.6} /></Slot>
          <Omnibox>
            <TuneCircle><Tune /></TuneCircle>
            <Url>simplilearn-net.zoom.us/rec/play/l7BgVEJ1ugFU6QK_qBM_CHSPrhJHvuhZ9gprbpWgOwfo59ae4EEFTHYUO8VlaVgptTivlVQfWlWz...</Url>
            <OmniIcons>
              <Slot $w={52}><ZoomIn size={23} strokeWidth={2.6} /></Slot>
              <Slot $w={46}><Star size={23} strokeWidth={2.6} /></Slot>
            </OmniIcons>
          </Omnibox>
          <Slot $w={52} $ml={13}><Extension /></Slot>
          <Slot $w={28}><ToolSep /></Slot>
          <Slot $w={56}><MediaQueue /></Slot>
          <Slot $w={50}><DownloadIc /></Slot>
          <Slot $w={58}><SidePanel /></Slot>
          <Slot $w={50}><Avatar>A</Avatar></Slot>
          <Slot $w={56}><Kebab /></Slot>
        </Toolbar>
      </Chrome>

      <Main>
        <Content>
          <Paint>
            <TitleRow>
              <PaintLogo />Untitled - Paint
              <WinCtl>
                <Minus size={11} strokeWidth={1} />
                <svg width="11" height="11" viewBox="0 0 11 11" fill="none" stroke="#a0a0a0" strokeWidth=".8"><rect x="2" y="3" width="6" height="7" rx="1" /><path d="M4 1h4a2 2 0 0 1 2 2v4" /></svg>
                <X size={11} strokeWidth={1} />
              </WinCtl>
            </TitleRow>
            <MenuRow>
              <MenuItem>File</MenuItem>
              <MenuItem>Edit</MenuItem>
              <MenuItem>View</MenuItem>
              <Slot $w={24}><Save /></Slot>
              <Slot $w={42}><Undo /></Slot>
              <Slot $w={20}><Redo /></Slot>
              <MenuRight><UserDot /><Settings size={13} strokeWidth={1.5} /></MenuRight>
            </MenuRow>
            <Ribbon>
              <Group $w={59} $sep>
                <GroupBody><SoloColumn><SoloIcon><Dashed /></SoloIcon><Chev /></SoloColumn></GroupBody>
                <GroupLabel>Selection</GroupLabel>
              </Group>
              <Group $w={113} $sep>
                <GroupBody>
                  <ImageRow>
                    <ImageGrid>
                      <Cell><Crop size={13} color="#b0b0b0" strokeWidth={1.3} /></Cell>
                      <Cell><Rotate /><Chev c="#bbb" /></Cell>
                      <Cell><Skew /></Cell>
                      <Cell><Flip /><Chev c="#bbb" /></Cell>
                    </ImageGrid>
                    <ResizeCell><ResizeImg /></ResizeCell>
                  </ImageRow>
                </GroupBody>
                <GroupLabel>Image</GroupLabel>
              </Group>
              <Group $w={103} $sep>
                <GroupBody>
                  <ToolsGrid>
                    <Cell><Pencil /></Cell>
                    <Cell><FillBucket /></Cell>
                    <Cell><ActiveTool>A</ActiveTool></Cell>
                    <Cell><Eraser /></Cell>
                    <Cell><Picker /></Cell>
                    <Cell><ZoomIn size={13} color="#555" strokeWidth={1.4} /></Cell>
                  </ToolsGrid>
                </GroupBody>
                <GroupLabel>Tools</GroupLabel>
              </Group>
              <Group $w={50} $sep>
                <GroupBody><SoloColumn><SoloIcon><Brush /></SoloIcon><Chev /></SoloColumn></GroupBody>
                <GroupLabel>Brushes</GroupLabel>
              </Group>
              <Group $w={209} $sep>
                <GroupBody>
                  <ShapesRow>
                    <ShapesPanel>
                      {shapes.map((d, i) => (
                        <ShapeCell key={i}><svg width="14" height="14" viewBox="0 0 16 16" fill="none" stroke="#444" strokeWidth="1.100" strokeLinejoin="round"><path d={d} /></svg></ShapeCell>
                      ))}
                    </ShapesPanel>
                    <GreyTools>
                      <GreyTool><svg width="13" height="12" viewBox="0 0 13 12" fill="none" stroke="#bbb"><rect x="1" y="1" width="10" height="10" rx="1.500" /><path d="M4 9l7-7" /></svg><Chev c="#ccc" /></GreyTool>
                      <GreyTool><svg width="13" height="12" viewBox="0 0 13 12" fill="none" stroke="#bbb"><rect x="1" y="1" width="11" height="10" rx="1.500" /><circle cx="5" cy="6" r="2" /></svg><Chev c="#ccc" /></GreyTool>
                    </GreyTools>
                  </ShapesRow>
                </GroupBody>
                <GroupLabel>Shapes</GroupLabel>
              </Group>
              <Group $w={42} $sep>
                <GroupBody><SoloColumn><SoloIcon><SizeIc /></SoloIcon><Chev c="#bbb" /></SoloColumn></GroupBody>
                <GroupLabel>Size</GroupLabel>
              </Group>
              <Group $w={283} $sep>
                <GroupBody>
                  <ColorsRow>
                    <ActiveColours>
                      <CurrentColour><CurrentInner /></CurrentColour>
                      <SecondColour />
                    </ActiveColours>
                    <Swatches>
                      {row1.map(c => <Swatch key={c} $c={c} />)}
                      {row2.map(c => <Swatch key={c} $c={c} />)}
                      {row1.map(c => <Swatch key={c + "e"} />)}
                    </Swatches>
                    <Wheel><WheelPlus /></Wheel>
                  </ColorsRow>
                </GroupBody>
                <GroupLabel>Colors</GroupLabel>
              </Group>
              <Group $w={59} $sep>
                <GroupBody><LoneIcon><Sparkle /></LoneIcon></GroupBody>
                <GroupLabel>Cocreator</GroupLabel>
              </Group>
              <Group $w={49}>
                <GroupBody><LoneIcon><Layers size={18} strokeWidth={1} color="#3f5f7f" /></LoneIcon></GroupBody>
                <GroupLabel>Layers</GroupLabel>
              </Group>
            </Ribbon>
            <Workspace>
              <Gutter />
              <Canvas>
                <Drawn $x={276} $y={74} $w={555} $h={343} />
                <DrawnText $x={305} $y={153}>Email :</DrawnText>
                <Drawn $x={484} $y={140} $w={308} $h={41} />
                <DrawnText $x={310} $y={239}>Password:</DrawnText>
                <Drawn $x={482} $y={226} $w={313} $h={39} />
                <DrawnButton $x={463} $y={331} $w={156} $h={50} />
                <TextSelection>
                  <Highlight>Login</Highlight>
                  <Handle $x="0" $y="0" /><Handle $x="50%" $y="0" /><Handle $x="100%" $y="0" />
                  <Handle $x="0" $y="50%" /><Handle $x="100%" $y="50%" />
                  <Handle $x="0" $y="100%" /><Handle $x="50%" $y="100%" /><Handle $x="100%" $y="100%" />
                </TextSelection>
              </Canvas>
              <RailGutter>
                <Rail>
                  <Tri $size={3.5} $c="#666" />
                  <RailThumb />
                  <Tri $down $size={3.5} $c="#666" />
                </Rail>
              </RailGutter>
              <TextBar>
                <Select $w={138}>Calibri<Chev c="#555" /></Select>
                <Select $w={52} $ml={10}>20<Chev c="#555" /></Select>
                <FmtBtn $on $ml={17}><Bold size={13} strokeWidth={3} /></FmtBtn>
                <FmtBtn $ml={6}><Italic size={12} strokeWidth={1.3} /></FmtBtn>
                <FmtBtn $ml={6}><Underline size={12} strokeWidth={1.3} /></FmtBtn>
                <FmtBtn $ml={6}><Strikethrough size={12} strokeWidth={1.3} /></FmtBtn>
                <FmtBtn $on $ml={16}><AlignLeft size={13} strokeWidth={1.3} /></FmtBtn>
                <FmtBtn $ml={6}><AlignCenter size={13} strokeWidth={1.3} /></FmtBtn>
                <FmtBtn $ml={6}><AlignRight size={13} strokeWidth={1.3} /></FmtBtn>
                <BarSep />
                <Check />
                <CheckLabel>Background fill</CheckLabel>
              </TextBar>
            </Workspace>
            <StatusBar>
              <StatusCell $w={104}><MousePointer2 size={10} strokeWidth={1.2} color="#222" /></StatusCell>
              <StatusCell $w={102} $sep><SelIc />129 × 43px</StatusCell>
              <StatusCell $w={120} $sep><CanvasIc />1334 × 1282px</StatusCell>
              <ZoomControls>
                <Fit />
                <ZoomSelect $w={66}>100%<Chev c="#555" /></ZoomSelect>
                <ZoomOutSlot><ZoomOut size={13} strokeWidth={1.4} /></ZoomOutSlot>
                <Slider><SliderFill /><SliderKnob /></Slider>
                <ZoomIn size={13} strokeWidth={1.4} />
              </ZoomControls>
            </StatusBar>
            <InnerTaskbar>
              <InnerWeather><HazeSun s={20} /><div>35°C<br />Smoke</div></InnerWeather>
              <InnerStart><WinLogo s={18} /></InnerStart>
              <InnerSearch>
                <Search size={11} color="#222" strokeWidth={1.8} />Search
                <DoodleWrap><Cat /></DoodleWrap>
              </InnerSearch>
              <InnerIcons>
                <InnerIcon><svg width="14" height="14" viewBox="0 0 14 14"><rect x="4" y="1" width="9" height="9" fill="#eee" /><rect x="1" y="4" width="9" height="9" fill="#222" /><rect x="4" y="4" width="6" height="6" fill="#bbb" /></svg></InnerIcon>
                <InnerIcon><Teams /></InnerIcon>
                <InnerIcon><Edge /></InnerIcon>
                <InnerIcon><Sublime /></InnerIcon>
                <InnerIcon><FolderIc s={19} /></InnerIcon>
                <InnerIcon><Dial /></InnerIcon>
                <InnerIcon><ColorCam /></InnerIcon>
                <InnerIcon><WordMini /></InnerIcon>
                <InnerIcon><ChromeIc s={21} /></InnerIcon>
                <InnerIcon><Slack /></InnerIcon>
                <InnerIcon><VSCode s={19} /></InnerIcon>
                <InnerIcon><Firefox /></InnerIcon>
                <InnerIcon><Mysql /></InnerIcon>
                <InnerIcon><DarkDisc /></InnerIcon>
                <InnerIcon $on><ChromeAvatar><ChromeIc s={21} /><MiniAvatar /></ChromeAvatar></InnerIcon>
                <InnerIcon><Notepad s={22} /><BadgeDots /></InnerIcon>
                <InnerIcon><PaintLogo s={20} /></InnerIcon>
              </InnerIcons>
              <InnerClock>7:50 PM<br />3/23/2024</InnerClock>
              <Copilot s={18} />
            </InnerTaskbar>
          </Paint>
        </Content>
        <PageScroll>
          <Tri />
          <PageThumb />
          <PageDown $down />
        </PageScroll>
      </Main>

      <Taskbar>
        <TaskWeather>
          <HazeSun />
          <WeatherText>32°C<WeatherSub>Haze</WeatherSub></WeatherText>
        </TaskWeather>
        <TaskIcons>
          <TaskIcon><WinLogo /></TaskIcon>
          <TaskIcon><Search size={36} color="#222" strokeWidth={2.6} /></TaskIcon>
          <TaskIcon><TaskView /></TaskIcon>
          <TaskIcon><ChatIc /></TaskIcon>
          <TaskIcon $dot><FolderIc /></TaskIcon>
          <TaskIcon $on><ChromeIc s={40} /></TaskIcon>
          <TaskIcon $dot><WordIc /></TaskIcon>
          <TaskIcon $dot><Notepad /></TaskIcon>
          <TaskIcon><VSCode /></TaskIcon>
          <TaskIcon><Store /></TaskIcon>
          <TaskIcon><MyHP>my<MyHPBold>hp</MyHPBold></MyHP></TaskIcon>
          <TaskIcon><HelpWrap>?<HelpDot /></HelpWrap></TaskIcon>
          <TaskIcon><Cmd /></TaskIcon>
        </TaskIcons>
        <Tray>
          <Slot $w={36}><ChevronUp size={24} strokeWidth={2} /></Slot>
          <Slot $w={60}><Cloud /></Slot>
          <TrayText $w={54}>ENG<br />IN</TrayText>
          <Slot $w={36} $ml={12}><Wifi /></Slot>
          <Slot $w={32}><Vol /></Slot>
          <Slot $w={42}><Battery /></Slot>
          <TrayText $w={110} $r>14:06<br />25-03-2024</TrayText>
          <Slot $w={30} $ml={8}><Bell /></Slot>
          <Slot $w={50} $ml={12}><Copilot s={36} /></Slot>
        </Tray>
      </Taskbar>

      <ShieldBadge>
        <svg width="66" height="82" viewBox="0 0 66 82">
          <path d="M33 0c8 7 20 12 33 14 0 30-12 53-33 68C12 68 0 45 0 14 13 12 25 7 33 0z" fill="#fff" />
          <path d="M22 40l10 11 15-21" fill="none" stroke="#66a9e6" strokeWidth="3.500" strokeLinecap="round" strokeLinejoin="round" />
        </svg>
      </ShieldBadge>
    </Page>
  );
}
